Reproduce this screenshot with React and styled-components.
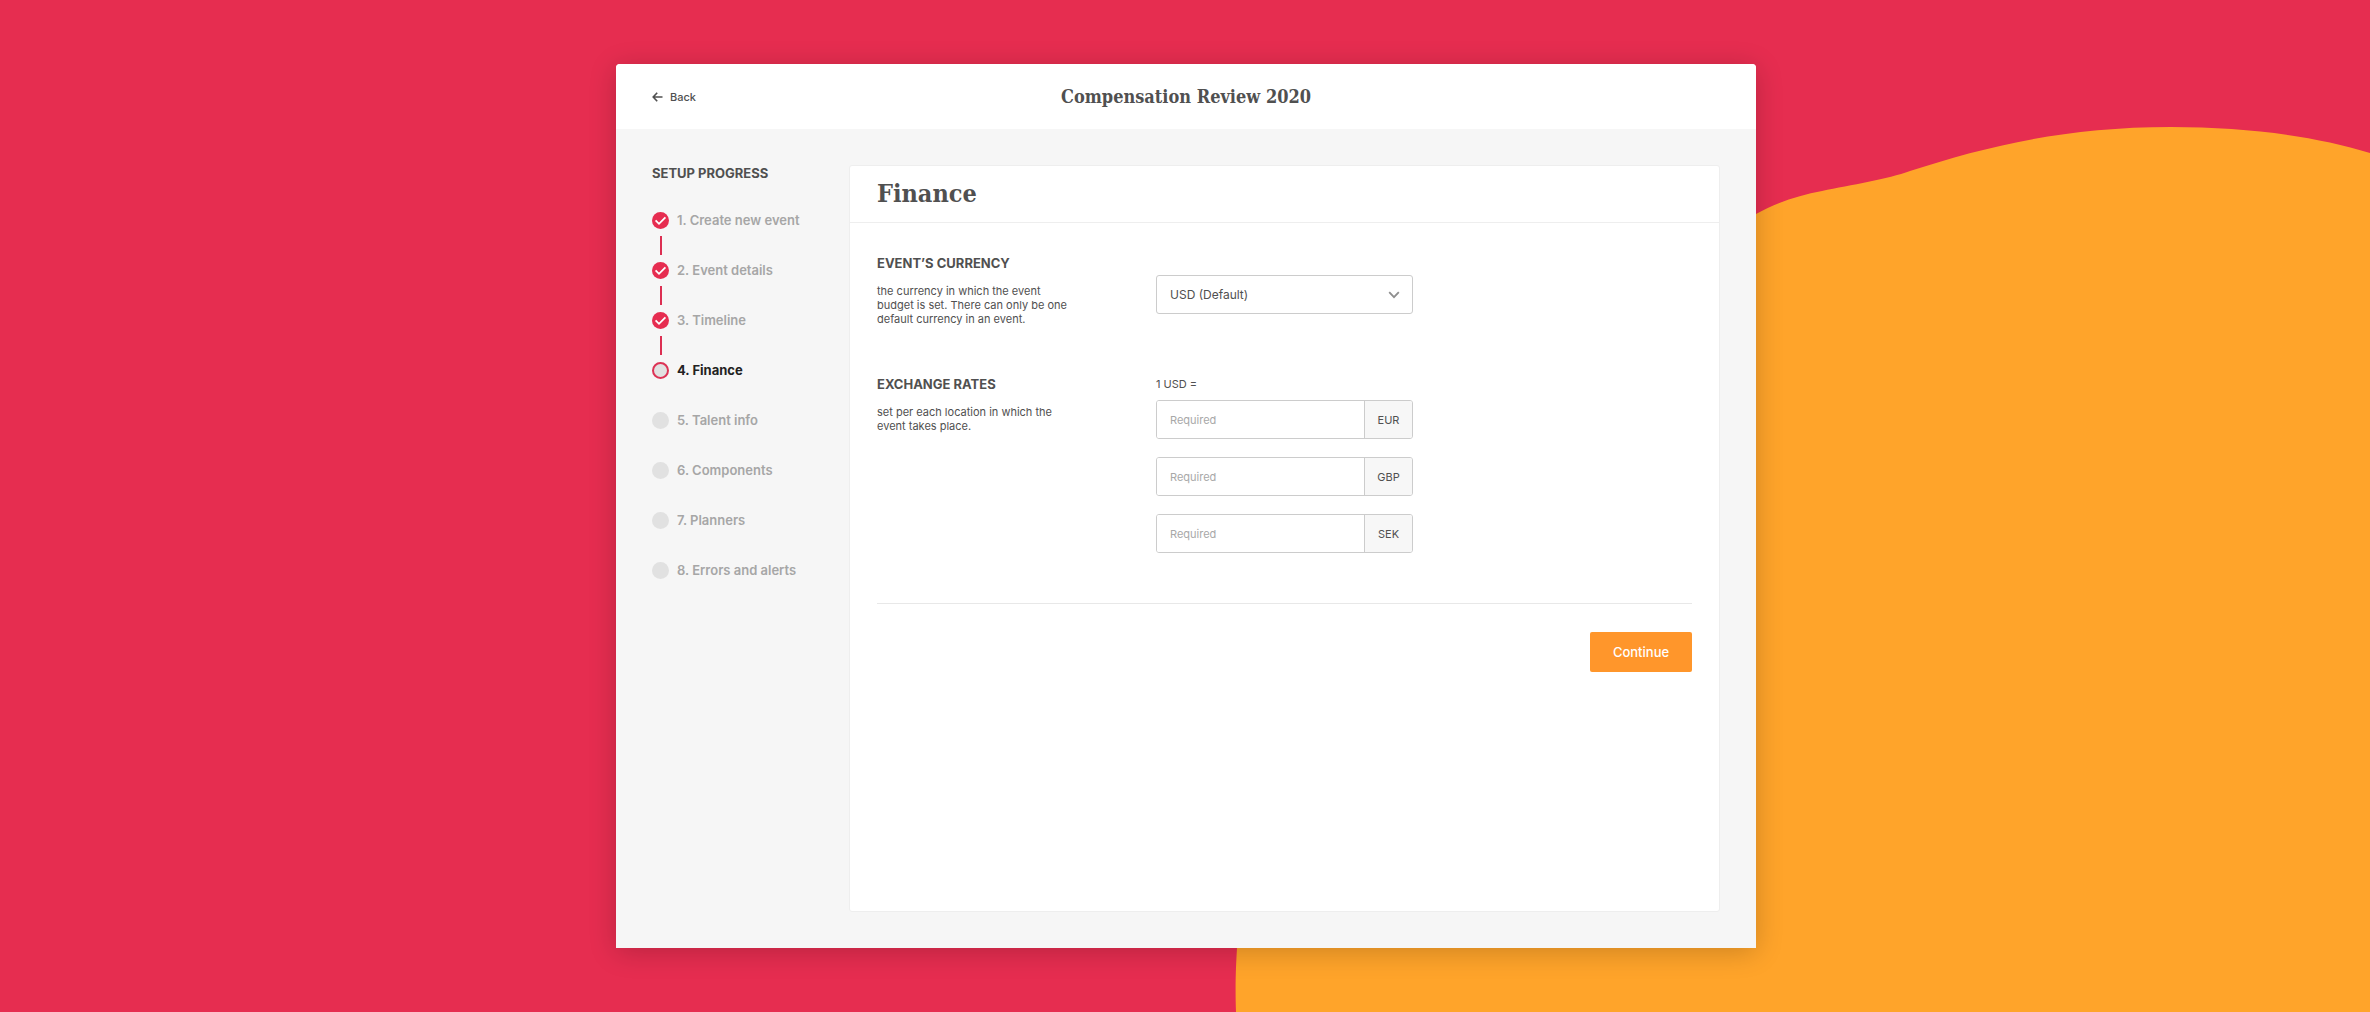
import React, { useState } from "react";
import styled, { createGlobalStyle } from "styled-components";

const GlobalStyle = createGlobalStyle`
  * {
    box-sizing: border-box;
  }
  body {
    margin: 0;
    background: #e62d50;
    color: #505050;
    font-family: Inter, "Liberation Sans", sans-serif;
    font-size: 12px;
    line-height: 14px;
  }
  h1, h2, h3, p, ol {
    margin: 0;
    padding: 0;
  }
  button, input, select {
    font-family: inherit;
  }
`;

const Page = styled.div`
  position: relative;
  display: flex;
  flex-direction: column;
  align-items: center;
  min-height: 100vh;
  padding: 64px 22px 64px 24px;
`;

/* Orange shape behind the window */
const Backdrop = styled.svg`
  position: absolute;
  inset: 0;
  width: 100%;
  height: 100%;
`;

const Window = styled.div`
  position: relative;
  display: flex;
  flex-direction: column;
  flex: 1;
  width: 100%;
  max-width: 1140px;
  background: #f6f6f6;
  border-radius: 4px 4px 0 0;
  box-shadow: 0 4px 28px rgba(0, 0, 0, 0.2);
`;

const TopBar = styled.header`
  display: grid;
  grid-template-columns: 1fr auto 1fr;
  align-items: center;
  height: 65px;
  padding: 0 36px;
  background: white;
  border-radius: 4px 4px 0 0;
`;

const BackLink = styled.a`
  display: flex;
  align-items: center;
  justify-self: start;
  gap: 7px;
  color: #505050;
  font-size: 11px;
  font-weight: 500;
  text-decoration: none;
`;

const PageTitle = styled.h1`
  font-family: "DejaVu Serif Condensed", "DejaVu Serif", serif;
  font-size: 18px;
  font-weight: 700;
  line-height: 24px;
`;

const Body = styled.div`
  display: flex;
  flex: 1;
  padding: 36px;
`;

const Sidebar = styled.nav`
  flex: none;
  width: 197px;
`;

const Heading = styled.h3`
  font-size: 13px;
  font-weight: 700;
  line-height: 16px;
  text-transform: uppercase;
`;

const Steps = styled.ol`
  margin-top: 31px;
  list-style: none;
`;

const StepItem = styled.li`
  display: flex;
  gap: 8px;
  height: 50px;
  color: ${(props) => (props.$status === "current" ? "#222222" : "#a6a6a6")};
  font-size: 13px;
  font-weight: ${(props) => (props.$status === "current" ? 700 : 600)};
  line-height: 17px;
`;

const Track = styled.div`
  display: flex;
  flex-direction: column;
  align-items: center;
  gap: 7px;
`;

const Marker = styled.span`
  display: flex;
  width: 17px;
  height: 17px;
  border-radius: 50%;
  background: ${(props) => (props.$status === "done" ? "#e62d50" : "#e1e1e1")};
  border: ${(props) => (props.$status === "current" ? "2px solid #dc3355" : "none")};
`;

const Connector = styled.span`
  width: 2px;
  height: 19px;
  background: #dc2f52;
`;

const Card = styled.main`
  flex: 1;
  min-width: 0;
  background: white;
  border: 1px solid #eeeeee;
  border-radius: 3px;
`;

const CardHeader = styled.div`
  display: flex;
  align-items: center;
  height: 57px;
  padding: 0 27px;
  border-bottom: 1px solid #eeeeee;
`;

const CardTitle = styled.h2`
  font-family: "DejaVu Serif Condensed", "DejaVu Serif", serif;
  font-size: 25px;
  font-weight: 700;
  line-height: 28px;
`;

const Form = styled.form`
  padding: 32px 27px;
`;

const Section = styled.section`
  display: grid;
  grid-template-columns: 200px 257px;
  column-gap: 79px;
  margin-bottom: 50px;
`;

const Description = styled.p`
  margin-top: 13px;
  font-size: 11px;
`;

const SelectBox = styled.div`
  position: relative;
  margin-top: 20px;
  height: 39px;
`;

const Select = styled.select`
  appearance: none;
  width: 100%;
  height: 100%;
  padding: 0 40px 0 13px;
  border: 1px solid #cccccc;
  border-radius: 3px;
  background: white;
  color: #505050;
  font-size: 12px;
`;

const Chevron = styled.svg`
  position: absolute;
  top: 16px;
  right: 13px;
  pointer-events: none;
`;

const Rates = styled.div`
  display: flex;
  flex-direction: column;
  gap: 18px;
  margin-top: 8px;
`;

const BaseRate = styled.p`
  font-size: 11px;
  line-height: 16px;
`;

const RateField = styled.div`
  display: flex;
  height: 39px;
  border: 1px solid #cccccc;
  border-radius: 3px;
  overflow: hidden;
`;

const RateInput = styled.input`
  flex: 1;
  min-width: 0;
  padding: 0 13px;
  border: 0;
  color: #505050;
  font-size: 11px;

  &::placeholder {
    color: #a8a8a8;
  }
`;

const RateUnit = styled.label`
  display: flex;
  align-items: center;
  justify-content: center;
  width: 48px;
  border-left: 1px solid #cccccc;
  background: #f7f7f7;
  font-size: 11px;
`;

const Actions = styled.div`
  display: flex;
  justify-content: flex-end;
  padding-top: 28px;
  border-top: 1px solid #e8e8e8;
`;

const ContinueButton = styled.button`
  width: 102px;
  height: 40px;
  border: 0;
  border-radius: 2px;
  background: #ff962b;
  color: white;
  font-size: 13px;
  font-weight: 500;
  cursor: pointer;
`;

const steps = [
  { id: 1, title: "Create new event", status: "done" },
  { id: 2, title: "Event details", status: "done" },
  { id: 3, title: "Timeline", status: "done" },
  { id: 4, title: "Finance", status: "current" },
  { id: 5, title: "Talent info", status: "todo" },
  { id: 6, title: "Components", status: "todo" },
  { id: 7, title: "Planners", status: "todo" },
  { id: 8, title: "Errors and alerts", status: "todo" },
];

const currencies = ["EUR", "GBP", "SEK"];

const Step = ({ step }) => (
  <StepItem
    $status={step.status}
    aria-current={step.status === "current" ? "step" : undefined}
  >
    <Track>
      <Marker $status={step.status}>
        {step.status === "done" && (
          <svg width="17" height="17" viewBox="0 0 17 17" fill="none">
            <path d="M3.6 8.400l3.400 3.400 6.400-6.400" stroke="white" strokeWidth="1.8" />
          </svg>
        )}
      </Marker>
      {step.status === "done" && <Connector />}
    </Track>
    <span>
      {step.id}. {step.title}
    </span>
  </StepItem>
);

const App = () => {
  const [rates, setRates] = useState({ EUR: "", GBP: "", SEK: "" });

  const handleRateChange = (code, value) => {
    setRates({ ...rates, [code]: value });
  };

  return (
    <Page>
      <GlobalStyle />
      <Backdrop viewBox="0 0 2370 1012" preserveAspectRatio="xMaxYMid slice" aria-hidden="true">
        <path
          d="M1236 1012C1235 985 1236 965 1237 948C1262 620 1540 360 1756 214C1776 203 1799 195 1822 191C1851 185 1888 179 1910 171C1984 147 2064 127 2171 127C2247 127 2315 136 2370 153V1012Z"
          fill="#ffa42a"
        />
      </Backdrop>
      <Window>
        <TopBar>
          <BackLink href="#">
            <svg width="11" height="10" viewBox="0 0 11 10" fill="none" stroke="#505050" strokeWidth="1.6">
              <path d="M10.5 5H1.3M5.2 .8L1.2 5l4 4.2" />
            </svg>
            Back
          </BackLink>
          <PageTitle>Compensation Review 2020</PageTitle>
        </TopBar>
        <Body>
          <Sidebar>
            <Heading>Setup progress</Heading>
            <Steps>
              {steps.map((step) => (
                <Step key={step.id} step={step} />
              ))}
            </Steps>
          </Sidebar>
          <Card>
            <CardHeader>
              <CardTitle>Finance</CardTitle>
            </CardHeader>
            <Form onSubmit={(e) => e.preventDefault()}>
              <Section>
                <div>
                  <Heading as="label" htmlFor="currency">Event’s currency</Heading>
                  <Description>
                    the currency in which the event budget is set. There can
                    only be one default currency in an event.
                  </Description>
                </div>
                <SelectBox>
                  <Select id="currency">
                    <option>USD (Default)</option>
                  </Select>
                  <Chevron width="12" height="8" viewBox="0 0 12 8" fill="none">
                    <path d="M1.2 1.2L6 6.2l4.800-5" stroke="#8e8e8e" strokeWidth="1.8" />
                  </Chevron>
                </SelectBox>
              </Section>
              <Section>
                <div>
                  <Heading>Exchange rates</Heading>
                  <Description>
                    set per each location in which the event takes place.
                  </Description>
                </div>
                <div>
                  <BaseRate>1 USD =</BaseRate>
                  <Rates>
                    {currencies.map((code) => (
                      <RateField key={code}>
                        <RateInput
                          id={`rate-${code}`}
                          placeholder="Required"
                          value={rates[code]}
                          onChange={(e) => handleRateChange(code, e.target.value)}
                        />
                        <RateUnit htmlFor={`rate-${code}`}>{code}</RateUnit>
                      </RateField>
                    ))}
                  </Rates>
                </div>
              </Section>
              <Actions>
                <ContinueButton type="submit">Continue</ContinueButton>
              </Actions>
            </Form>
          </Card>
        </Body>
      </Window>
    </Page>
  );
};

export default App;
